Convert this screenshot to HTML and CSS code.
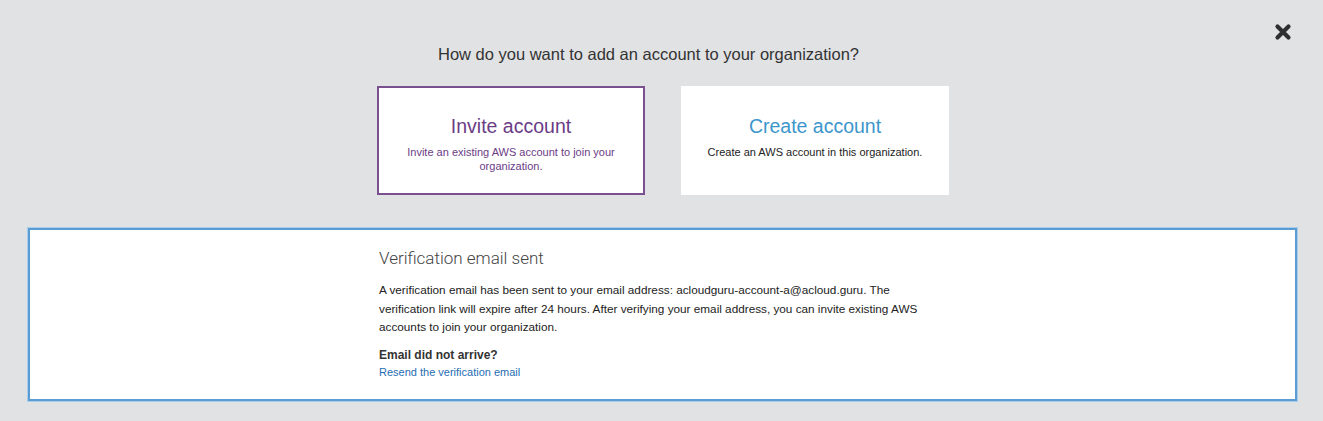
FILE: index.html
```html
<!DOCTYPE html>
<html lang="en">
<head>
<meta charset="utf-8">
<title>Add account</title>
<link rel="stylesheet" href="styles.css">
</head>
<body>
<button class="close" aria-label="Close">
  <svg width="18" height="18" viewBox="0 0 18 18"><path d="M3.5 3.5 L14.5 14.5 M14.5 3.5 L3.5 14.5" stroke="#2f2f2f" stroke-width="4.2" stroke-linecap="round" fill="none"/></svg>
</button>
<main class="page">
  <h1 class="question">How do you want to add an account to your organization?</h1>
  <div class="options">
    <div class="option option-selected">
      <div class="option-title">Invite account</div>
      <div class="option-desc">Invite an existing AWS account to join your organization.</div>
    </div>
    <div class="option option-create">
      <div class="option-title">Create account</div>
      <div class="option-desc">Create an AWS account in this organization.</div>
    </div>
  </div>
  <section class="notice">
    <div class="notice-body">
      <h2 class="notice-title">Verification email sent</h2>
      <p class="notice-text">A verification email has been sent to your email address: acloudguru-account-a@acloud.guru. The verification link will expire after 24 hours. After verifying your email address, you can invite existing AWS accounts to join your organization.</p>
      <div class="notice-sub">Email did not arrive?</div>
      <a class="notice-link" href="#">Resend the verification email</a>
    </div>
  </section>
</main>
</body>
</html>
```
FILE: styles.css
```css
html, body {
  margin: 0;
  padding: 0;
}
body {
  background: #e1e2e4;
  font-family: "Liberation Sans", Arial, sans-serif;
  color: #222;
  height: 421px;
  overflow: hidden;
}
.close {
  position: absolute;
  top: 23px;
  left: 1274px;
  width: 18px;
  height: 18px;
  padding: 0;
  border: 0;
  background: transparent;
  cursor: pointer;
}
.close svg { display: block; }
.page {
  padding-top: 44px;
}
.question {
  margin: 0;
  font-size: 16.5px;
  line-height: 20px;
  font-weight: normal;
  color: #333;
  text-align: center;
  padding-right: 26px;
}
.options {
  display: flex;
  justify-content: center;
  gap: 36px;
  margin-top: 22px;
  padding-left: 3px;
}
.option {
  box-sizing: border-box;
  width: 268px;
  height: 109px;
  background: #fff;
  border: 2px solid transparent;
  padding: 26px 14px 0;
  text-align: center;
}
.option-selected {
  border-color: #7a5091;
}
.option-title {
  font-size: 19.5px;
  line-height: 24px;
}
.option-desc {
  margin-top: 7px;
  font-size: 11px;
  line-height: 14px;
}
.option-selected .option-title,
.option-selected .option-desc {
  color: #6b3c86;
}
.option-create .option-title {
  color: #3c96cc;
}
.option-create .option-desc {
  color: #222;
}
.notice {
  box-sizing: border-box;
  margin: 33px 26px 0 28px;
  height: 173px;
  background: #fff;
  border: 2px solid #5b9dd3;
  box-shadow: 0 0 0 1px #a9cdeb;
  padding-top: 17px;
}
.notice-body {
  width: 569px;
  margin: 0 auto;
  padding-left: 1px;
  box-sizing: border-box;
}
.notice-title {
  margin: 0;
  font-family: Roboto, "Liberation Sans", sans-serif;
  font-weight: 300;
  font-size: 17px;
  line-height: 22px;
  color: #444;
}
.notice-text {
  margin: 12px 0 0;
  font-size: 11.75px;
  line-height: 18.5px;
  color: #222;
}
.notice-sub {
  margin-top: 10px;
  font-size: 12px;
  line-height: 17px;
  font-weight: bold;
  color: #333;
}
.notice-link {
  display: block;
  font-size: 11px;
  line-height: 17px;
  color: #1f6db3;
  text-decoration: none;
}
```
